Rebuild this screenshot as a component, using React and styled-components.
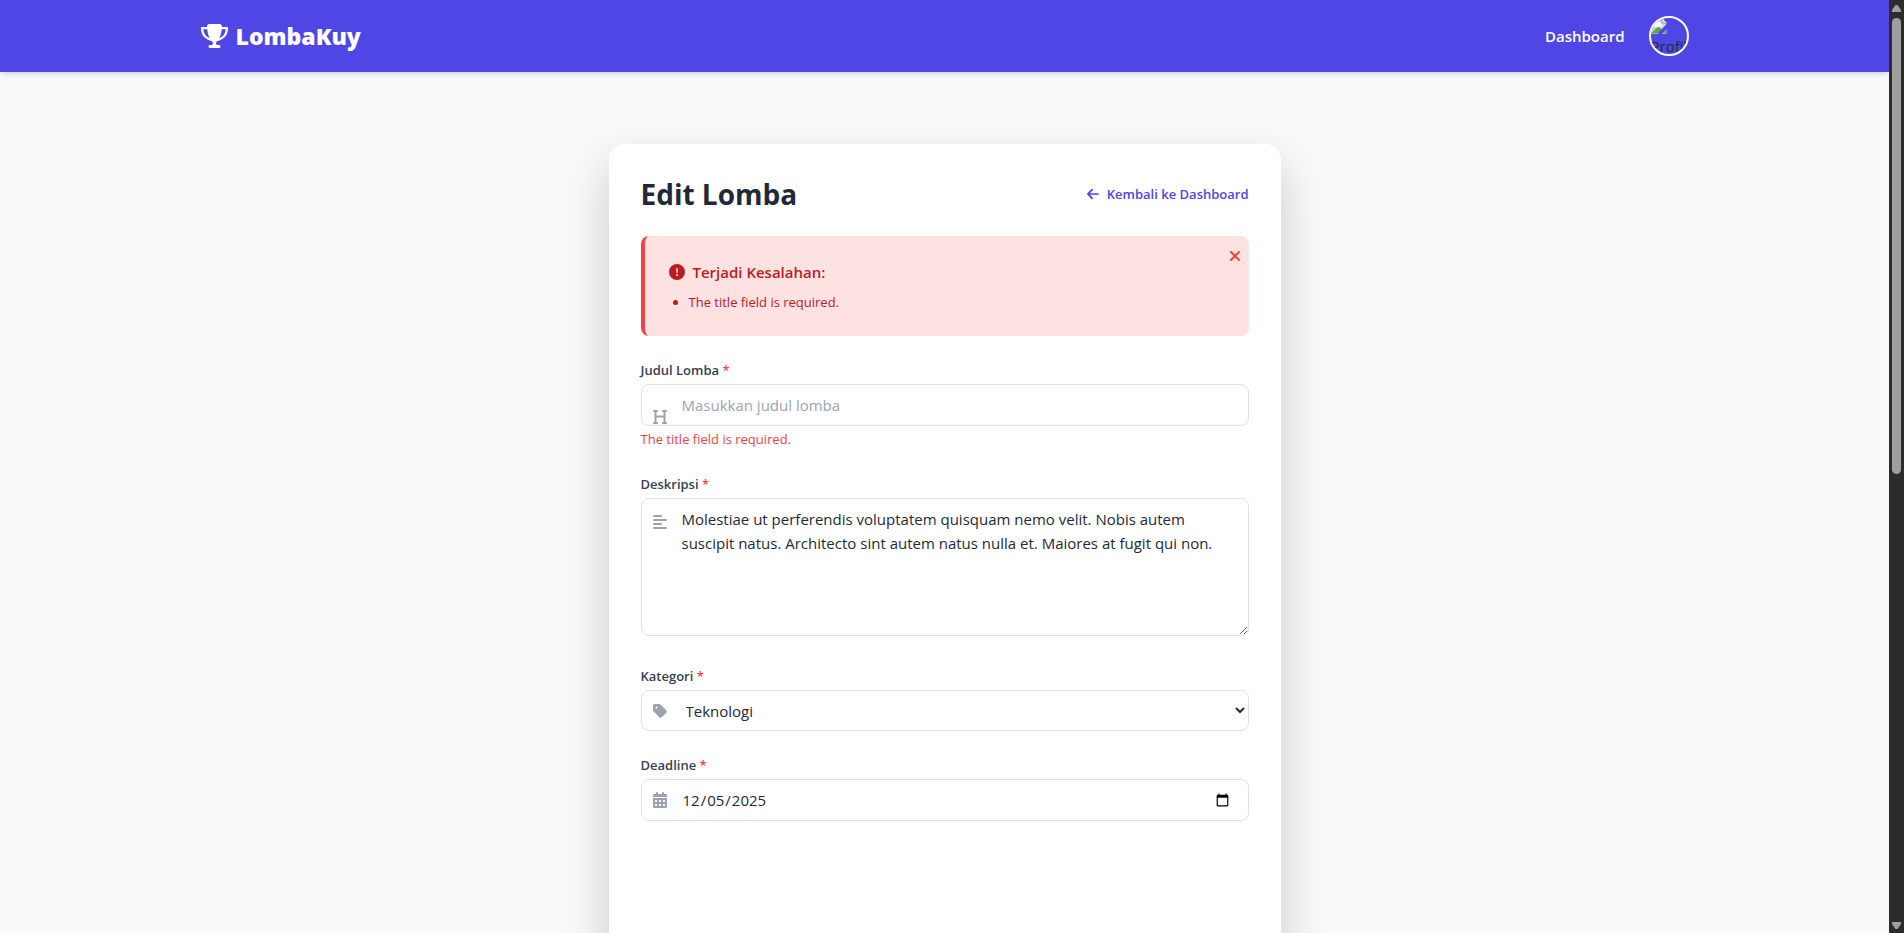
import React from "react";
import styled, { createGlobalStyle } from "styled-components";
import {
  FaTrophy,
  FaCircleExclamation,
  FaArrowLeft,
  FaXmark,
  FaHeading,
  FaAlignLeft,
  FaTag,
  FaCalendarDays,
} from "react-icons/fa6";

const GlobalStyle = createGlobalStyle`
  *, *::before, *::after { box-sizing: border-box; }
  body {
    margin: 0;
    background: #f9fafb;
    color: #1f2937;
    font-family: "Open Sans", "Noto Sans", sans-serif;
    font-size: 16px;
    line-height: 24px;
  }
  h1, h2, ul, p { margin: 0; }
  button, input, select, textarea { font: inherit; color: inherit; }
  svg { display: block; }
`;

const Shell = styled.div`
  display: grid;
  grid-template-columns: minmax(0, 1fr) 15px;
  height: 100vh;
`;

const Page = styled.div`
  overflow: hidden;
`;

const NavBar = styled.header`
  position: relative;
  background: #4f46e5;
  color: #ffffff;
  box-shadow: 0 4px 6px -1px rgba(0, 0, 0, 0.1), 0 2px 4px -2px rgba(0, 0, 0, 0.1);
`;

const NavInner = styled.div`
  display: flex;
  align-items: center;
  justify-content: space-between;
  max-width: 1536px;
  margin: 0 auto;
  padding: 16px 24px;
`;

const Icon = styled.span`
  flex: none;
  svg {
    width: ${(p) => p.$width}px;
    height: ${(p) => p.$height}px;
  }
`;

const Brand = styled.a`
  display: flex;
  align-items: center;
  gap: 8px;
  color: inherit;
  text-decoration: none;
  font-size: 23px;
  font-weight: 800;
  line-height: 32px;
`;

const NavLinks = styled.nav`
  display: flex;
  align-items: center;
  gap: 24px;
`;

const NavLink = styled.a`
  color: inherit;
  font-weight: 600;
  font-size: 15px;
  text-decoration: none;
`;

const Avatar = styled.a`
  width: 40px;
  height: 40px;
  border: 2px solid #ffffff;
  border-radius: 50%;
  overflow: hidden;
  color: #1f2937;
  font-size: 15px;
  line-height: 24px;
  text-decoration: none;
`;

const Main = styled.main`
  padding: 72px 24px;
`;

const Card = styled.section`
  max-width: 672px;
  min-height: 160vh;
  margin: 0 auto;
  padding: 32px;
  background: #ffffff;
  border-radius: 16px;
  box-shadow: 0 20px 50px rgba(0, 0, 0, 0.2);
`;

const CardHead = styled.div`
  display: flex;
  align-items: center;
  justify-content: space-between;
  margin-bottom: 24px;
`;

const Title = styled.h1`
  font-size: 28px;
  line-height: 36px;
  font-weight: 700;
`;

const BackLink = styled.a`
  display: flex;
  align-items: center;
  gap: 8px;
  color: #4f46e5;
  font-size: 13px;
  font-weight: 600;
  line-height: 20px;
  text-decoration: none;
`;

const Alert = styled.div`
  position: relative;
  margin-bottom: 24px;
  padding: 24px;
  border-left: 4px solid #ef4444;
  border-radius: 8px;
  background: #fee2e2;
  color: #b91c1c;
`;

const AlertTitle = styled.h2`
  display: flex;
  align-items: center;
  gap: 8px;
  margin-bottom: 8px;
  font-size: 15px;
  font-weight: 600;
  line-height: 24px;
`;

const AlertList = styled.ul`
  padding-left: 20px;
  font-size: 13px;
  line-height: 20px;
`;

const AlertClose = styled.button`
  position: absolute;
  top: 12px;
  right: 8px;
  padding: 0;
  border: 0;
  background: none;
  color: #ef4444;
  cursor: pointer;
`;

const Form = styled.form`
  display: flex;
  flex-direction: column;
  gap: 24px;
`;

const FieldGroup = styled.div`
  display: flex;
  flex-direction: column;
  gap: 4px;
`;

const Label = styled.label`
  color: #374151;
  font-size: 13px;
  font-weight: 600;
  line-height: 20px;
`;

const Required = styled.span`
  color: #ef4444;
`;

const ControlBox = styled.div`
  position: relative;
`;

const ControlIcon = styled(Icon)`
  position: absolute;
  left: 12px;
  ${(p) => (p.$top ? "top: 16px;" : "top: 50%; transform: translateY(-50%);")}
  color: #9ca3af;
  pointer-events: none;
`;

const controlStyle = `
  display: block;
  width: 100%;
  border: 1px solid #dfe1e7;
  border-radius: 8px;
  background: #ffffff;
  font-size: 15px;
  line-height: 24px;
  outline: none;
`;

const TextInput = styled.input`
  ${controlStyle}
  height: 42px;
  padding: 8px 16px 8px 40px;
  &::placeholder { color: #9ca3af; }
`;

const TextArea = styled.textarea`
  ${controlStyle}
  margin-bottom: 6px;
  padding: 8px 16px 8px 40px;
  resize: vertical;
`;

const Select = styled.select`
  ${controlStyle}
  height: 41px;
  padding: 8px 0 8px 40px;
`;

const FieldError = styled.p`
  padding: 3px 0 1px;
  color: #ef4444;
  font-size: 13px;
  line-height: 20px;
`;

const ScrollTrack = styled.div`
  display: flex;
  flex-direction: column;
  align-items: center;
  justify-content: space-between;
  padding: 5px 0 4px;
  background: #2c2c2c;
`;

const ScrollBody = styled.div`
  flex: 1;
  width: 9px;
  padding: 6px 0 10px;
`;

const ScrollThumb = styled.div`
  height: 51%;
  border-radius: 5px;
  background: #9f9f9f;
`;

function ScrollArrow({ down }) {
  return (
    <svg width="9" height="7" viewBox="0 0 9 7" aria-hidden="true">
      <path
        d={down ? "M0 0H9V2L5.5 7H3.5L0 2Z" : "M0 7H9V5L5.5 0H3.5L0 5Z"}
        fill="#9f9f9f"
      />
    </svg>
  );
}

function MissingImage() {
  return (
    <svg width="16" height="16" viewBox="0 0 16 16" aria-hidden="true">
      <path d="M0 0H11L15.5 4.500V16H0Z" fill="#c4d4f3" />
      <path d="M3 6.500a2 2 0 0 1 2.500-2A2.500 2.500 0 0 1 10 6a1.500 1.500 0 0 1 0 3H4a1.500 1.500 0 0 1-1-2.500Z" fill="#ffffff" />
      <path d="M0 15.500 5 10.500 8 9 12 12 9 15.500Z" fill="#55ab3a" />
      <path d="M11 0V5H16Z" fill="#f4f4f4" stroke="#9a9a9a" />
      <path d="M16 5.500 6.500 16H11L16 11Z" fill="#4f46e5" />
      <path d="M12 15.500 15.500 12V15.500Z" fill="#55ab3a" />
    </svg>
  );
}

function Field({ id, label, icon, iconTop, error, children }) {
  return (
    <FieldGroup>
      <Label htmlFor={id}>
        {label} <Required>*</Required>
      </Label>
      <ControlBox>
        {children}
        <ControlIcon $width={14} $height={16} $top={iconTop}>
          {icon}
        </ControlIcon>
        {error && <FieldError>{error}</FieldError>}
      </ControlBox>
    </FieldGroup>
  );
}

export default function App() {
  return (
    <>
      <GlobalStyle />
      <Shell>
        <Page>
          <NavBar>
            <NavInner>
              <Brand href="#home">
                <Icon $width={27} $height={24}>
                  <FaTrophy />
                </Icon>
                LombaKuy
              </Brand>
              <NavLinks>
                <NavLink href="#dashboard">Dashboard</NavLink>
                <Avatar href="#profile">
                  <MissingImage />
                  Profil
                </Avatar>
              </NavLinks>
            </NavInner>
          </NavBar>
          <Main>
            <Card>
              <CardHead>
                <Title>Edit Lomba</Title>
                <BackLink href="#dashboard">
                  <Icon $width={12} $height={14}>
                    <FaArrowLeft />
                  </Icon>
                  Kembali ke Dashboard
                </BackLink>
              </CardHead>
              <Alert role="alert">
                <AlertTitle>
                  <Icon $width={16} $height={16}>
                    <FaCircleExclamation />
                  </Icon>
                  Terjadi Kesalahan:
                </AlertTitle>
                <AlertList>
                  <li>The title field is required.</li>
                </AlertList>
                <AlertClose type="button" aria-label="Tutup">
                  <Icon $width={12} $height={16}>
                    <FaXmark />
                  </Icon>
                </AlertClose>
              </Alert>
              <Form>
                <Field
                  id="title"
                  label="Judul Lomba"
                  icon={<FaHeading />}
                  error="The title field is required."
                >
                  <TextInput id="title" type="text" placeholder="Masukkan judul lomba" />
                </Field>
                <Field id="description" label="Deskripsi" icon={<FaAlignLeft />} iconTop>
                  <TextArea
                    id="description"
                    rows={5}
                    defaultValue="Molestiae ut perferendis voluptatem quisquam nemo velit. Nobis autem suscipit natus. Architecto sint autem natus nulla et. Maiores at fugit qui non."
                  />
                </Field>
                <Field id="category" label="Kategori" icon={<FaTag />}>
                  <Select id="category" defaultValue="Teknologi">
                    <option>Teknologi</option>
                  </Select>
                </Field>
                <Field id="deadline" label="Deadline" icon={<FaCalendarDays />}>
                  <TextInput id="deadline" type="date" defaultValue="2025-12-05" />
                </Field>
              </Form>
            </Card>
          </Main>
        </Page>
        <ScrollTrack aria-hidden="true">
          <ScrollArrow />
          <ScrollBody>
            <ScrollThumb />
          </ScrollBody>
          <ScrollArrow down />
        </ScrollTrack>
      </Shell>
    </>
  );
}
